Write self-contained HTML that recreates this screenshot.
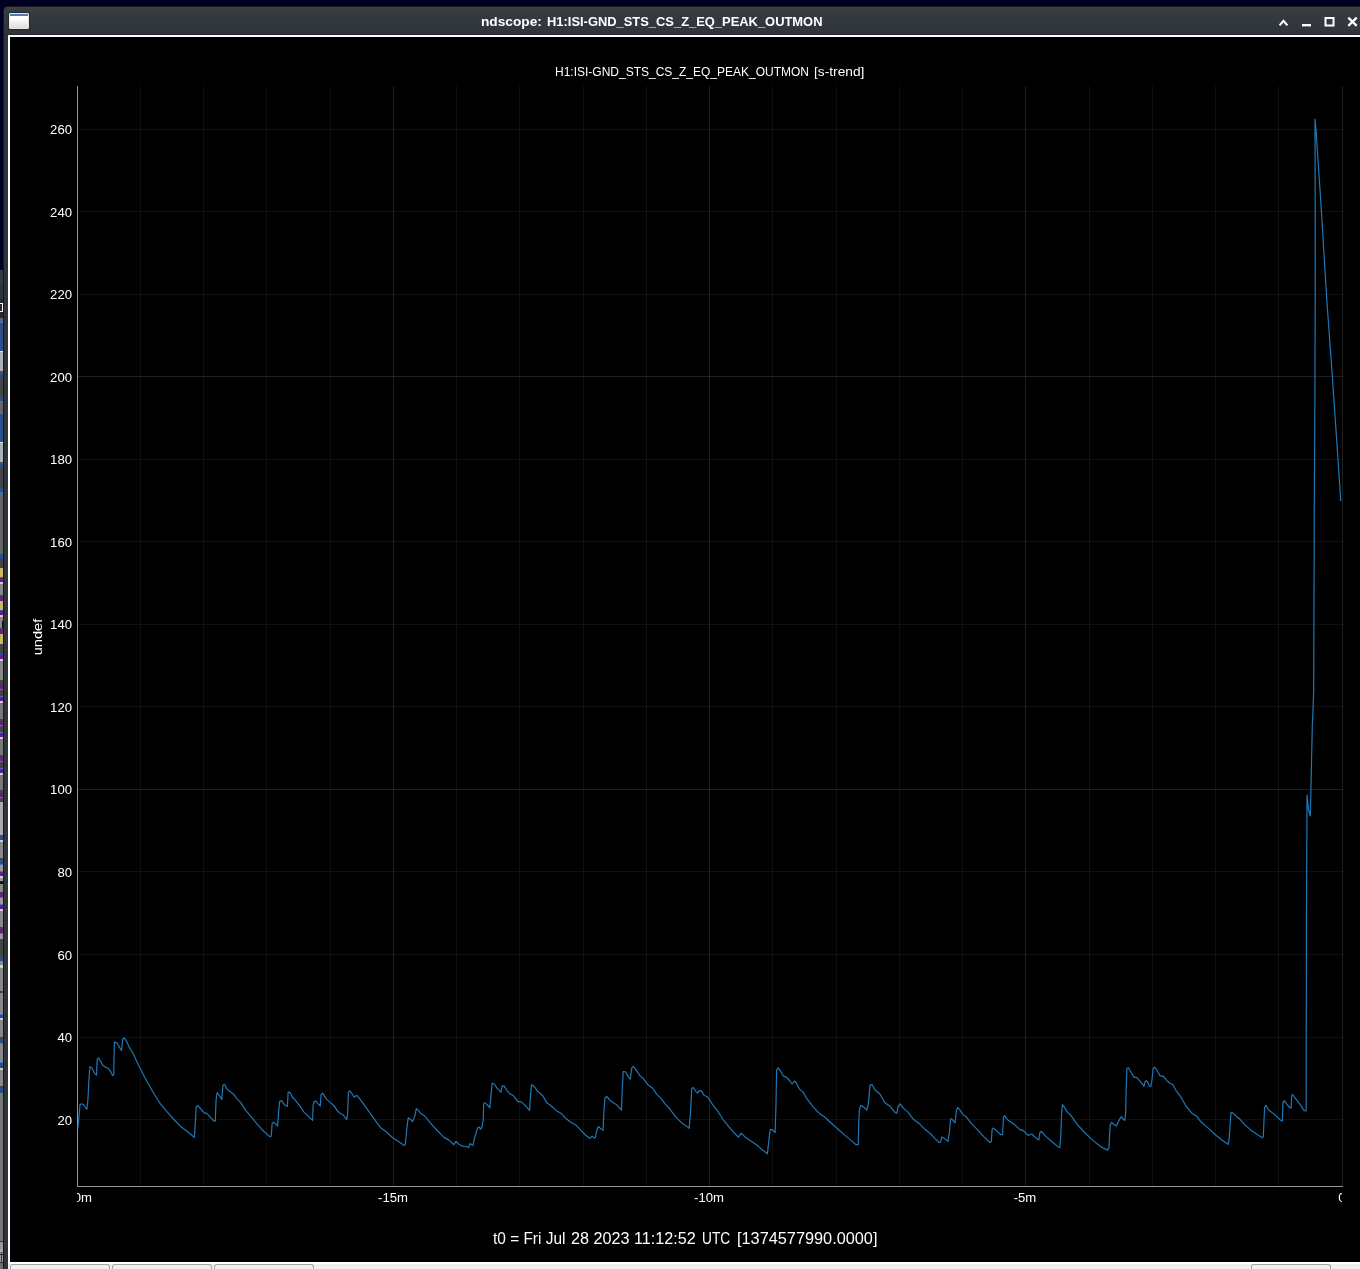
<!DOCTYPE html>
<html><head><meta charset="utf-8"><title>ndscope</title>
<style>
html,body{margin:0;padding:0;background:#000;overflow:hidden;}
body{width:1360px;height:1269px;position:relative;overflow:hidden;font-family:"Liberation Sans",sans-serif;color:#fff;}
#root{position:absolute;left:0;top:0;width:1360px;height:1269px;overflow:hidden;}
#desk{position:absolute;left:0;top:0;width:1360px;height:1269px;background:#000023;}
#strip{position:absolute;left:0;top:0;width:3px;height:1269px;background:linear-gradient(to bottom,#000023 0px,#000023 270px,#3c4147 270px,#3c4147 271px,#353a40 271px,#353a40 285px,#2f333a 285px,#2f333a 299px,#282828 299px,#282828 318px,#666666 318px,#666666 322px,#4a70d0 322px,#4a70d0 323px,#2a508c 323px,#2a508c 351px,#e0e8e8 351px,#e0e8e8 352px,#a4b4b8 352px,#a4b4b8 371px,#555 371px,#555 373px,#2a508c 373px,#2a508c 377px,#444444 377px,#444444 397px,#2a508c 397px,#2a508c 401px,#4a70d0 401px,#4a70d0 402px,#666666 402px,#666666 413px,#4a70d0 413px,#4a70d0 414px,#2a508c 414px,#2a508c 442px,#e0e8e8 442px,#e0e8e8 443px,#a4b4b8 443px,#a4b4b8 462px,#555 462px,#555 464px,#2a508c 464px,#2a508c 468px,#444444 468px,#444444 488px,#2a508c 488px,#2a508c 492px,#4a70d0 492px,#4a70d0 493px,#666666 493px,#666666 554px,#2a508c 554px,#2a508c 559px,#444444 559px,#444444 568px,#c8b860 568px,#c8b860 577px,#3a50c0 577px,#3a50c0 578px,#6a1a8a 578px,#6a1a8a 582px,#cccccc 582px,#cccccc 584px,#888888 584px,#888888 595px,#444444 595px,#444444 597px,#6a1a8a 597px,#6a1a8a 601px,#c8b860 601px,#c8b860 610px,#3a50c0 610px,#3a50c0 611px,#6a1a8a 611px,#6a1a8a 615px,#cccccc 615px,#cccccc 617px,#888888 617px,#888888 628px,#444444 628px,#444444 630px,#6a1a8a 630px,#6a1a8a 634px,#c8b860 634px,#c8b860 644px,#444444 644px,#444444 654px,#3a50c0 654px,#3a50c0 655px,#6a1a8a 655px,#6a1a8a 659px,#cccccc 659px,#cccccc 661px,#888888 661px,#888888 680px,#444444 680px,#444444 685px,#6a1a8a 685px,#6a1a8a 689px,#4a70d0 689px,#4a70d0 690px,#444444 690px,#444444 696px,#4a70d0 696px,#4a70d0 697px,#6a1a8a 697px,#6a1a8a 701px,#cccccc 701px,#cccccc 703px,#777 703px,#777 719px,#444444 719px,#444444 721px,#6a1a8a 721px,#6a1a8a 725px,#4a70d0 725px,#4a70d0 726px,#444444 726px,#444444 732px,#4a70d0 732px,#4a70d0 733px,#6a1a8a 733px,#6a1a8a 737px,#cccccc 737px,#cccccc 739px,#777 739px,#777 755px,#444444 755px,#444444 757px,#6a1a8a 757px,#6a1a8a 761px,#4a70d0 761px,#4a70d0 762px,#444444 762px,#444444 768px,#4a70d0 768px,#4a70d0 769px,#6a1a8a 769px,#6a1a8a 773px,#cccccc 773px,#cccccc 775px,#777 775px,#777 790px,#444444 790px,#444444 793px,#6a1a8a 793px,#6a1a8a 797px,#4a70d0 797px,#4a70d0 798px,#444444 798px,#444444 802px,#aaa 802px,#aaa 835px,#2a508c 835px,#2a508c 840px,#cccccc 840px,#cccccc 842px,#888888 842px,#888888 858px,#444444 858px,#444444 860px,#2a508c 860px,#2a508c 864px,#4a70d0 864px,#4a70d0 865px,#999 865px,#999 871px,#4a70d0 871px,#4a70d0 872px,#6a1a8a 872px,#6a1a8a 876px,#cccccc 876px,#cccccc 878px,#999 878px,#999 881px,#222 881px,#222 882px,#111 882px,#111 884px,#888888 884px,#888888 892px,#444444 892px,#444444 893px,#6a1a8a 893px,#6a1a8a 897px,#4a70d0 897px,#4a70d0 898px,#999 898px,#999 904px,#4a70d0 904px,#4a70d0 905px,#6a1a8a 905px,#6a1a8a 909px,#cccccc 909px,#cccccc 911px,#888888 911px,#888888 927px,#444444 927px,#444444 929px,#6a1a8a 929px,#6a1a8a 933px,#4a70d0 933px,#4a70d0 934px,#999 934px,#999 939px,#444444 939px,#444444 957px,#2a508c 957px,#2a508c 961px,#888888 961px,#888888 965px,#cccccc 965px,#cccccc 968px,#888888 968px,#888888 991px,#444444 991px,#444444 993px,#888888 993px,#888888 1014px,#4a70d0 1014px,#4a70d0 1015px,#2a508c 1015px,#2a508c 1018px,#cccccc 1018px,#cccccc 1020px,#888888 1020px,#888888 1037px,#444444 1037px,#444444 1039px,#2a508c 1039px,#2a508c 1043px,#4a70d0 1043px,#4a70d0 1044px,#888888 1044px,#888888 1062px,#4a70d0 1062px,#4a70d0 1063px,#2a508c 1063px,#2a508c 1068px,#cccccc 1068px,#cccccc 1070px,#888888 1070px,#888888 1086px,#444444 1086px,#444444 1088px,#2a508c 1088px,#2a508c 1093px,#777 1093px,#777 1241px,#333 1241px,#333 1242px,#999 1242px,#999 1249px,#aaa 1249px,#aaa 1252px,#777 1252px,#777 1254px,#2a2a2a 1254px,#2a2a2a 1255px,#999 1255px,#999 1262px,#333 1262px,#333 1263px,#6e6e6e 1263px,#6e6e6e 1269px);}
#win{position:absolute;left:3px;top:6px;width:1357px;height:1263px;background:#2f333a;border-top-left-radius:5px;overflow:hidden;box-sizing:border-box;border-left:1px solid #15171e;border-top:1px solid #15171b;}
#tbar{position:absolute;left:0;top:0;width:100%;height:28px;background:linear-gradient(to bottom,#3d424a 0,#3d424a 1px,#393e44 1px,#34393f 11px,#30343c 27px,#262a31 27px,#262a31 28px);}
#white{position:absolute;left:4px;top:28px;width:1352px;height:1234px;background:#fff;}
#black{position:absolute;left:10px;top:37px;width:1350px;height:1225px;background:#000;}
#bbar{position:absolute;left:8px;top:1262px;width:1352px;height:7px;background:linear-gradient(to bottom,#fff 0,#fff 2px,#efefef 2px,#efefef 7px);}
.btn{position:absolute;top:1264px;height:5px;border:1px solid #a6a6a6;border-bottom:0;border-radius:3px 3px 0 0;background:#f1f1f1;box-sizing:border-box;}
#icon{position:absolute;left:9px;top:13px;width:20px;height:16px;box-sizing:border-box;border:1px solid #e4e4e0;border-radius:1px;background:linear-gradient(to bottom,#fff 0%,#fff 30%,#dcdcd6 100%);box-shadow:0 0 1px 1px rgba(30,33,38,.6);}
#icon i{position:absolute;left:0;top:0;width:18px;height:2px;background:#5079ba;}
#txt,#txt2{position:absolute;left:0;top:0;width:1360px;height:1269px;will-change:transform;}
.t{position:absolute;white-space:nowrap;line-height:1;transform-origin:0 50%;}
#wtitle{left:480.5px;top:16px;font-size:12px;font-weight:bold;color:#fff;transform:scaleX(1.093);}
#ctitle{left:554.5px;top:65.8px;font-size:12px;transform:scaleX(1.03);}
.yl{position:absolute;left:11.6px;width:60px;height:16px;line-height:16px;text-align:right;font-size:12.5px;white-space:nowrap;}
.yl{transform-origin:100% 50%;transform:scaleX(1.05);}
.xl{position:absolute;top:1.6px;height:16px;line-height:16px;font-size:12.5px;white-space:nowrap;width:80px;text-align:center;transform:scaleX(1.05);}
#undef{position:absolute;left:37.6px;top:637px;width:0;height:0;}
#undef span{position:absolute;display:block;white-space:nowrap;font-size:12.5px;line-height:16px;width:60px;left:-30px;top:-8px;text-align:center;transform:rotate(-90deg) scaleX(1.17);}
#t0{left:492px;top:1230px;font-size:16.3px;transform:scaleX(0.988);}
#clipx{position:absolute;left:77px;top:1188px;width:1265px;height:22px;overflow:hidden;}
</style></head><body>
<div id="root">
<div id="desk"></div>
<div id="strip"></div>
<div style="position:absolute;left:0;top:303px;width:3px;height:9px;box-sizing:border-box;border:1px solid #fff;border-left:0;margin-left:0"></div>
<div id="win"><div id="tbar"></div><div id="white"></div></div>
<div style="position:absolute;left:1px;top:1255px;width:1px;height:7px;background:#3a3a3a"></div>
<div style="position:absolute;left:0;top:589px;width:3px;height:5px;overflow:hidden"><svg width="3" height="5" viewBox="0 0 3 5"><path d="M3 0 L0.3 2.5 L3 5" fill="none" stroke="#000" stroke-width="1.3"/></svg></div>
<div style="position:absolute;left:2px;top:621px;width:1px;height:7px;background:#111"></div>
<div id="black"></div>
<div id="bbar"></div>
<div class="btn" style="left:10px;width:100px"></div>
<div class="btn" style="left:112px;width:100px"></div>
<div class="btn" style="left:214px;width:100px"></div>
<div class="btn" style="left:1251px;width:80px"></div>
<div id="icon"><i></i></div>
<div id="txt">
<div class="t" style="left:480.60px;top:16px;font-size:12px;font-weight:bold;color:#fff;transform:scaleX(1.1417)">ndscope:</div><div class="t" style="left:546.50px;top:16px;font-size:12px;font-weight:bold;color:#fff;transform:scaleX(1.0758)">H1:ISI-GND_STS_CS_Z_EQ_PEAK_OUTMON</div>
</div>
<svg id="ctl" style="position:absolute;left:1270px;top:10px" width="90" height="22" viewBox="1270 10 90 22">
<path d="M1279.6 25.4 L1283.5 20.8 L1287.4 25.4" fill="none" stroke="#fff" stroke-width="2.1" stroke-linecap="butt" stroke-linejoin="miter"/>
<rect x="1302" y="24" width="9" height="2.4" fill="#fff"/>
<rect x="1325.5" y="18" width="8" height="7.5" fill="none" stroke="#fff" stroke-width="2"/>
<path d="M1348.3 17.6 L1356.7 25.9 M1356.7 17.6 L1348.3 25.9" fill="none" stroke="#fff" stroke-width="2.2"/>
</svg>
<svg style="position:absolute;left:0;top:0" width="1360" height="1269" viewBox="0 0 1360 1269" shape-rendering="auto">
<rect x="140" y="86" width="1" height="1100" fill="rgba(255,255,255,0.06)"/>
<rect x="203" y="86" width="1" height="1100" fill="rgba(255,255,255,0.06)"/>
<rect x="266" y="86" width="1" height="1100" fill="rgba(255,255,255,0.06)"/>
<rect x="330" y="86" width="1" height="1100" fill="rgba(255,255,255,0.06)"/>
<rect x="393" y="86" width="1" height="1100" fill="rgba(255,255,255,0.118)"/>
<rect x="456" y="86" width="1" height="1100" fill="rgba(255,255,255,0.06)"/>
<rect x="519" y="86" width="1" height="1100" fill="rgba(255,255,255,0.06)"/>
<rect x="583" y="86" width="1" height="1100" fill="rgba(255,255,255,0.06)"/>
<rect x="646" y="86" width="1" height="1100" fill="rgba(255,255,255,0.06)"/>
<rect x="709" y="86" width="1" height="1100" fill="rgba(255,255,255,0.118)"/>
<rect x="772" y="86" width="1" height="1100" fill="rgba(255,255,255,0.06)"/>
<rect x="836" y="86" width="1" height="1100" fill="rgba(255,255,255,0.06)"/>
<rect x="899" y="86" width="1" height="1100" fill="rgba(255,255,255,0.06)"/>
<rect x="962" y="86" width="1" height="1100" fill="rgba(255,255,255,0.06)"/>
<rect x="1025" y="86" width="1" height="1100" fill="rgba(255,255,255,0.118)"/>
<rect x="1089" y="86" width="1" height="1100" fill="rgba(255,255,255,0.06)"/>
<rect x="1152" y="86" width="1" height="1100" fill="rgba(255,255,255,0.06)"/>
<rect x="1215" y="86" width="1" height="1100" fill="rgba(255,255,255,0.06)"/>
<rect x="1278" y="86" width="1" height="1100" fill="rgba(255,255,255,0.06)"/>
<rect x="1342" y="86" width="1" height="1100" fill="rgba(255,255,255,0.118)"/>
<rect x="78" y="1119" width="1265" height="1" fill="rgba(255,255,255,0.06)"/>
<rect x="78" y="1037" width="1265" height="1" fill="rgba(255,255,255,0.06)"/>
<rect x="78" y="954" width="1265" height="1" fill="rgba(255,255,255,0.06)"/>
<rect x="78" y="871" width="1265" height="1" fill="rgba(255,255,255,0.06)"/>
<rect x="78" y="789" width="1265" height="1" fill="rgba(255,255,255,0.118)"/>
<rect x="78" y="706" width="1265" height="1" fill="rgba(255,255,255,0.06)"/>
<rect x="78" y="624" width="1265" height="1" fill="rgba(255,255,255,0.06)"/>
<rect x="78" y="541" width="1265" height="1" fill="rgba(255,255,255,0.06)"/>
<rect x="78" y="459" width="1265" height="1" fill="rgba(255,255,255,0.06)"/>
<rect x="78" y="376" width="1265" height="1" fill="rgba(255,255,255,0.118)"/>
<rect x="78" y="294" width="1265" height="1" fill="rgba(255,255,255,0.06)"/>
<rect x="78" y="211" width="1265" height="1" fill="rgba(255,255,255,0.06)"/>
<rect x="78" y="129" width="1265" height="1" fill="rgba(255,255,255,0.06)"/>
<rect x="77" y="86" width="1" height="1101" fill="#969696"/>
<rect x="77" y="1186" width="1266" height="1" fill="#969696"/>
<polyline points="78.1,1127.4 80.0,1104.6 81.8,1103.8 84.0,1105.0 86.9,1109.3 87.9,1100.1 88.8,1081.8 89.9,1066.8 91.8,1067.8 94.3,1072.9 96.5,1075.1 97.2,1059.4 98.4,1057.8 100.9,1061.9 103.1,1065.6 105.3,1067.1 108.5,1068.5 110.9,1072.2 112.6,1075.6 113.7,1074.4 114.4,1042.1 116.8,1042.8 119.3,1047.2 121.5,1050.4 122.9,1038.7 124.4,1038.1 126.6,1041.3 129.6,1047.9 133.2,1053.5 137.6,1063.4 142.1,1072.2 147.9,1083.2 153.8,1093.5 160.4,1103.8 167.1,1111.9 174.4,1120.0 180.3,1126.2 187.6,1131.8 194.3,1137.4 195.3,1122.9 196.2,1106.8 197.9,1105.7 200.9,1109.0 204.1,1112.9 206.8,1113.4 209.7,1116.3 213.4,1120.7 215.3,1121.2 216.0,1100.9 217.1,1092.5 218.8,1095.0 221.8,1099.4 222.9,1085.4 224.4,1084.3 227.1,1089.1 230.3,1091.8 234.0,1094.7 236.2,1097.9 240.6,1102.4 245.7,1110.4 250.9,1116.3 256.8,1123.7 262.6,1130.3 270.0,1136.9 271.2,1136.2 272.1,1123.7 273.5,1122.2 275.9,1124.4 277.6,1126.2 278.5,1114.1 279.6,1101.6 281.5,1100.6 284.4,1104.6 287.4,1106.5 288.1,1092.1 289.9,1092.4 292.1,1096.5 295.7,1100.6 299.4,1105.3 303.8,1111.9 309.0,1117.1 312.6,1120.3 313.1,1105.3 314.1,1101.6 315.9,1101.2 318.5,1104.1 320.3,1106.0 321.0,1095.0 322.6,1093.2 326.6,1099.4 330.3,1102.4 334.0,1105.7 337.6,1111.2 340.6,1113.4 343.5,1115.3 346.8,1119.6 347.6,1114.1 348.4,1092.1 349.7,1090.9 352.4,1094.3 354.1,1097.2 356.8,1095.3 359.7,1098.7 365.6,1106.8 372.9,1117.1 380.3,1127.4 386.2,1131.8 392.1,1137.2 397.9,1140.9 404.1,1145.4 405.3,1145.0 406.8,1128.8 408.2,1117.8 410.4,1119.3 412.6,1121.5 414.9,1115.6 416.3,1108.7 418.2,1110.0 420.7,1113.4 425.1,1116.3 430.3,1122.9 437.6,1131.0 444.3,1137.6 448.7,1139.9 453.8,1144.7 456.0,1141.3 459.0,1144.3 462.6,1146.2 466.3,1146.5 468.5,1147.6 469.7,1145.0 470.0,1143.5 472.9,1145.4 475.1,1136.2 477.6,1128.1 479.1,1127.1 480.6,1129.1 482.1,1126.6 483.2,1120.0 483.7,1103.8 484.7,1102.6 487.4,1105.0 489.9,1107.9 490.9,1096.5 492.1,1083.2 494.3,1084.0 497.2,1088.4 500.9,1092.1 502.1,1086.2 504.1,1085.9 506.8,1090.3 510.0,1093.8 513.4,1095.7 517.8,1101.6 520.7,1101.6 524.4,1104.6 529.6,1110.4 530.3,1097.9 531.5,1084.7 534.0,1086.2 537.6,1091.3 542.8,1095.7 546.5,1102.4 550.1,1105.0 556.0,1110.4 561.2,1113.4 566.3,1118.8 570.7,1122.2 575.9,1125.1 580.3,1129.6 585.4,1135.0 589.9,1138.4 592.1,1136.2 594.3,1137.9 595.4,1137.4 596.8,1130.3 598.4,1126.6 600.9,1128.8 603.1,1130.3 603.8,1114.1 604.9,1097.9 606.8,1096.5 611.2,1101.6 616.3,1104.6 621.5,1110.0 622.2,1090.6 623.2,1071.5 625.6,1071.8 628.1,1076.6 630.3,1079.1 631.8,1067.8 633.2,1066.3 636.2,1070.0 639.9,1075.6 643.5,1078.8 647.9,1084.7 652.4,1087.9 656.8,1094.3 661.2,1098.7 665.6,1104.6 670.0,1109.0 670.0,1109.4 675.9,1117.1 681.8,1122.9 686.2,1125.9 689.1,1128.4 690.3,1115.6 691.8,1088.4 693.5,1087.6 695.7,1091.3 697.6,1093.2 699.4,1090.6 701.6,1090.9 703.8,1095.0 707.9,1097.2 712.6,1104.6 717.8,1111.2 722.9,1119.3 728.8,1126.6 734.7,1133.5 738.4,1137.2 741.3,1133.2 745.0,1136.9 750.9,1140.9 756.8,1145.0 762.6,1150.1 767.4,1153.8 768.8,1140.6 770.3,1129.6 772.2,1129.6 775.1,1132.5 775.9,1108.2 776.6,1070.0 778.1,1067.8 780.6,1071.2 783.2,1075.9 786.9,1077.6 789.9,1081.0 792.1,1084.0 794.3,1081.0 796.2,1082.5 799.4,1089.1 803.1,1092.1 806.8,1098.7 813.4,1107.1 820.0,1114.1 824.4,1116.8 830.3,1122.2 837.6,1128.8 845.0,1135.4 851.6,1140.9 856.0,1144.7 858.2,1144.7 858.7,1122.9 859.4,1109.7 860.9,1105.3 863.4,1106.8 866.8,1110.0 868.2,1104.6 869.3,1093.5 870.0,1085.4 870.7,1084.7 872.2,1084.7 875.1,1090.3 879.6,1093.5 884.7,1102.4 890.6,1106.8 895.0,1112.4 896.9,1113.1 897.9,1106.8 900.1,1103.8 903.1,1107.9 908.2,1112.4 913.4,1119.3 919.3,1123.7 925.1,1129.6 930.3,1133.5 935.4,1139.1 939.1,1142.5 940.6,1142.1 941.8,1136.9 944.3,1138.4 947.9,1141.3 949.4,1133.2 950.6,1118.8 952.1,1119.3 955.0,1122.9 956.5,1110.4 957.6,1107.5 959.7,1109.7 962.6,1114.1 966.3,1117.1 971.5,1123.7 977.4,1129.6 984.0,1136.9 989.9,1142.5 991.3,1141.8 992.1,1129.6 993.2,1128.1 996.5,1130.6 1000.9,1134.7 1002.6,1134.7 1003.5,1117.1 1004.6,1115.6 1007.5,1119.7 1013.4,1123.7 1020.0,1129.6 1022.9,1130.3 1028.1,1135.4 1031.8,1134.0 1035.4,1137.6 1038.8,1139.9 1039.9,1132.5 1041.3,1131.5 1046.5,1136.9 1053.1,1142.8 1059.7,1147.9 1060.7,1137.6 1061.6,1114.1 1062.4,1104.6 1064.1,1106.8 1067.1,1111.9 1070.0,1114.4 1072.9,1118.2 1077.4,1124.7 1083.2,1131.0 1089.1,1136.9 1094.3,1141.6 1100.9,1146.8 1107.5,1150.1 1109.0,1147.9 1109.7,1131.8 1110.4,1124.4 1111.6,1122.5 1114.1,1124.7 1116.3,1125.9 1118.5,1121.5 1120.0,1118.5 1121.2,1116.6 1122.9,1118.8 1124.7,1120.4 1125.6,1114.1 1126.2,1089.1 1126.9,1068.5 1128.5,1067.8 1131.0,1072.2 1134.0,1077.1 1136.9,1077.6 1140.6,1081.8 1144.0,1086.2 1145.0,1081.8 1146.5,1080.7 1148.2,1083.2 1149.4,1086.2 1150.9,1086.5 1152.1,1078.8 1153.1,1068.5 1154.6,1067.1 1156.8,1070.0 1160.0,1075.6 1163.8,1076.6 1167.1,1081.0 1170.0,1083.2 1172.9,1084.7 1175.9,1090.3 1181.0,1097.2 1186.2,1106.5 1192.1,1113.4 1196.5,1115.9 1200.9,1121.8 1208.2,1128.1 1215.6,1135.0 1222.2,1140.3 1228.1,1144.3 1229.3,1137.6 1230.3,1121.5 1231.0,1112.6 1232.9,1112.9 1236.9,1116.8 1240.0,1119.3 1244.7,1124.6 1250.6,1129.9 1256.5,1134.1 1261.9,1137.6 1263.3,1137.0 1264.0,1120.5 1264.6,1107.5 1266.0,1105.3 1268.4,1109.8 1271.9,1112.4 1275.5,1115.2 1280.2,1119.9 1282.3,1121.1 1283.1,1101.6 1284.3,1100.6 1286.7,1104.2 1289.6,1107.5 1291.1,1108.1 1291.7,1095.7 1292.6,1094.5 1295.6,1098.6 1299.7,1103.9 1303.8,1110.1 1305.6,1111.0 1306.2,1109.8 1306.2,1100 1306.3,1000 1306.5,900 1306.9,830 1307.0,795 1308.6,810 1310.3,816 1310.9,790 1312.4,722 1312.9,714 1313.7,690 1314.0,600 1314.3,500 1314.9,400 1315.2,300 1315.2,200 1315.0,119 1315.8,127 1320.7,200 1326.8,300 1332.3,376 1338.0,459 1340.5,497 1340.5,501" fill="none" stroke="#1f77b4" stroke-width="1.2" stroke-linejoin="round"/>
</svg>
<div id="txt2">
<div class="t" style="left:554.75px;top:65.8px;font-size:12px;color:#fff;transform:scaleX(0.9996)">H1:ISI-GND_STS_CS_Z_EQ_PEAK_OUTMON</div><div class="t" style="left:814.00px;top:65.8px;font-size:12px;color:#fff;transform:scaleX(1.1444)">[s-trend]</div>
<div class="yl" style="top:1113px">20</div>
<div class="yl" style="top:1030px">40</div>
<div class="yl" style="top:948px">60</div>
<div class="yl" style="top:865px">80</div>
<div class="yl" style="top:782px">100</div>
<div class="yl" style="top:700px">120</div>
<div class="yl" style="top:617px">140</div>
<div class="yl" style="top:535px">160</div>
<div class="yl" style="top:452px">180</div>
<div class="yl" style="top:370px">200</div>
<div class="yl" style="top:287px">220</div>
<div class="yl" style="top:205px">240</div>
<div class="yl" style="top:122px">260</div>
<div id="undef"><span>undef</span></div>
<div id="clipx">
<div class="xl" style="left:-40.5px">-20m</div>
<div class="xl" style="left:275.5px">-15m</div>
<div class="xl" style="left:591.8px">-10m</div>
<div class="xl" style="left:908.0px">-5m</div>
<div class="xl" style="left:1225.3px">0</div>
</div>
<div class="t" style="left:492.60px;top:1230px;font-size:16.3px;color:#fff;transform:scaleX(0.9474)">t0 = Fri Jul</div><div class="t" style="left:571.00px;top:1230px;font-size:16.3px;color:#fff;transform:scaleX(0.9946)">28 2023 11:12:52</div><div class="t" style="left:702.40px;top:1230px;font-size:16.3px;color:#fff;transform:scaleX(0.8419)">UTC</div><div class="t" style="left:736.80px;top:1230px;font-size:16.3px;color:#fff;transform:scaleX(1.0007)">[1374577990.0000]</div>
</div>
</div>
</body></html>
